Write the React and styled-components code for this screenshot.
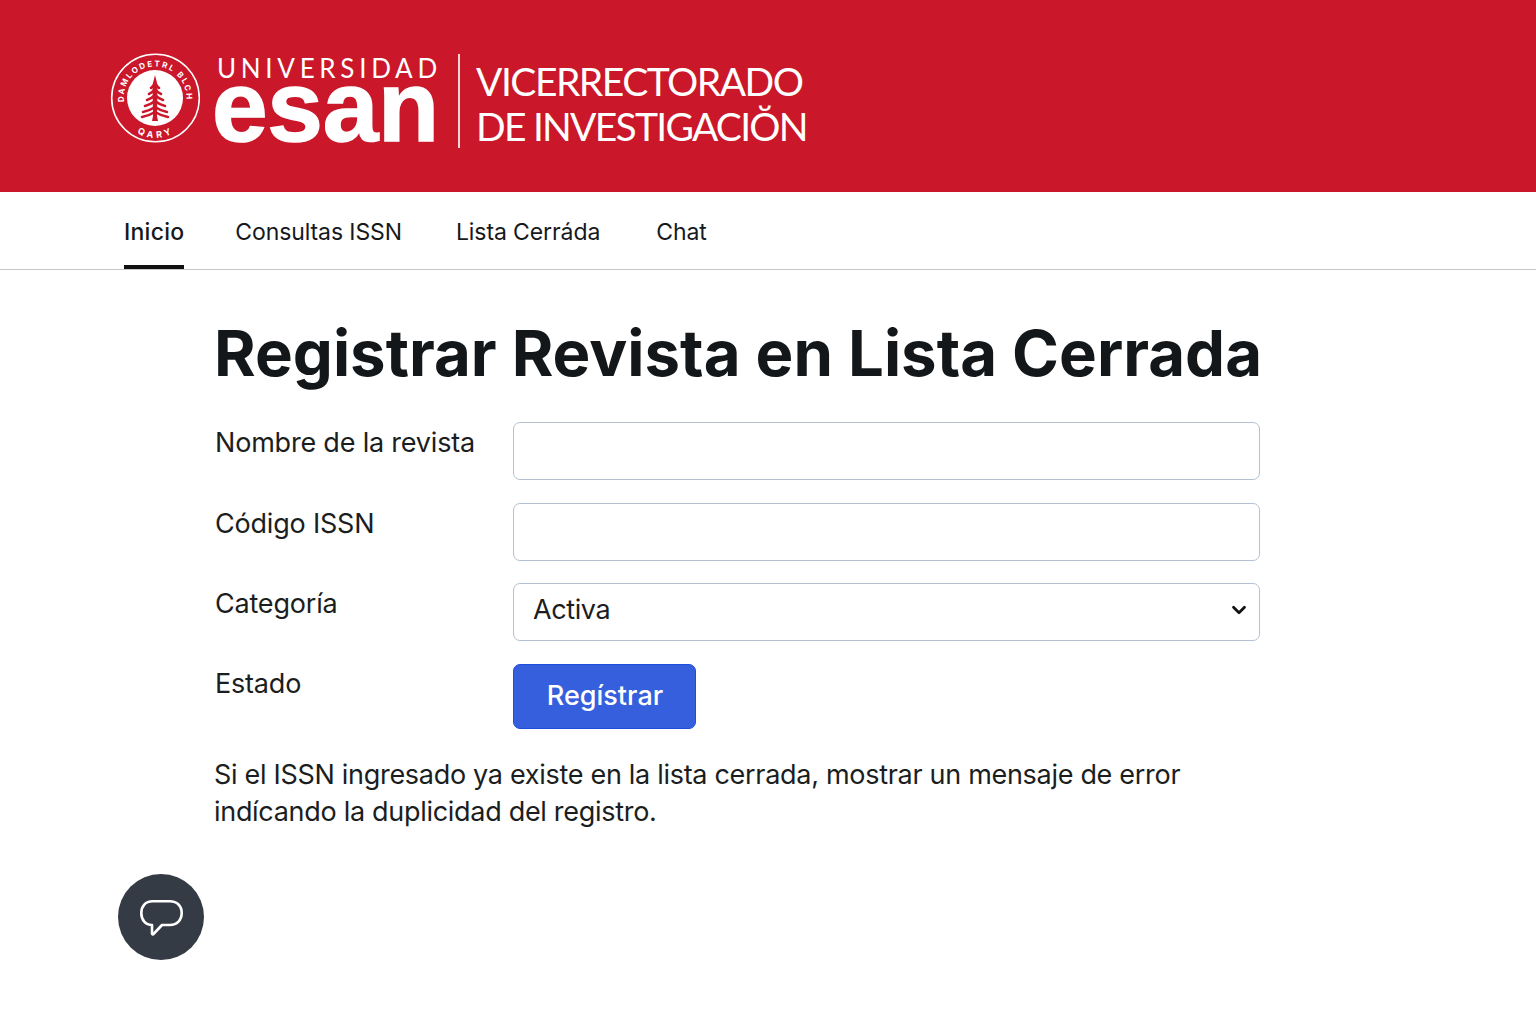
import React from "react";
import styled, { createGlobalStyle } from "styled-components";
import { ChevronDown } from "lucide-react";

const GlobalStyle = createGlobalStyle`
	html, body {
		margin: 0;
		background: #fff;
		font-family: Inter, "Liberation Sans", sans-serif;
		color: #14171a;
	}
	* {
		box-sizing: border-box;
	}
`;

const Page = styled.div`
	position: relative;
	width: 1536px;
	height: 1024px;
	overflow: hidden;
`;

const Header = styled.header`
	height: 192px;
	background: #ca1729;
	display: flex;
	align-items: center;
	padding: 10px 0 0 110px;
	color: #fff;
`;

const Seal = styled.svg`
	width: 90px;
	height: 92px;
	flex: none;
	margin-top: -6px;
`;

const Wordmark = styled.div`
	margin-left: 12px;
	width: 230px;
	height: 96px;
	display: flex;
	flex-direction: column;
`;

const University = styled.span`
	font-family: Lato, sans-serif;
	font-size: 26px;
	line-height: 30px;
	font-weight: 400;
	letter-spacing: 4.7px;
	margin-left: 5px;
	white-space: nowrap;
`;

const Esan = styled.span`
	font-family: "Liberation Sans", Arial, sans-serif;
	font-size: 100px;
	line-height: 46px;
	font-weight: 700;
	letter-spacing: -0.3px;
	-webkit-text-stroke: 1.5px #fff;
	white-space: nowrap;
`;

const Divider = styled.div`
	width: 2px;
	height: 94px;
	margin-left: 16px;
	background: #f4d5d8;
`;

const Unit = styled.div`
	margin-left: 16px;
	margin-top: 5px;
	font-family: Lato, sans-serif;
	font-size: 39px;
	line-height: 45px;
	font-weight: 400;
	white-space: nowrap;
`;

const UnitLine = styled.div`
	letter-spacing: ${(p) => p.$spacing}px;
`;

const Nav = styled.nav`
	height: 78px;
	border-bottom: 1px solid #c4c8cd;
	display: flex;
	padding-left: 124px;
`;

const NavItem = styled.a`
	height: 77px;
	margin-right: ${(p) => p.$gap}px;
	padding-top: 26px;
	font-size: 23px;
	line-height: 29px;
	letter-spacing: ${(p) => (p.$active ? "0.25px" : "-0.1px")};
	color: #16191c;
	font-weight: ${(p) => (p.$active ? 500 : 400)};
	border-bottom: ${(p) => (p.$active ? "4px solid #111" : "none")};
	white-space: nowrap;
`;

const Main = styled.main`
	width: 1046px;
	margin-left: 215px;
	padding-top: 45px;
`;

const Title = styled.h1`
	margin: 0 0 31px -1px;
	font-size: 63.5px;
	line-height: 76px;
	font-weight: 700;
	color: #14171a;
	white-space: nowrap;
`;

const FormGrid = styled.form`
	display: grid;
	grid-template-columns: 298px 747px;
	row-gap: 23px;
`;

const Label = styled.label`
	margin-top: ${(p) => (p.$raised ? "-1px" : "0")};
	font-size: 27px;
	line-height: 41px;
	letter-spacing: -0.2px;
	font-weight: 400;
	color: #1b1e21;
	white-space: nowrap;
`;

const Input = styled.input`
	display: block;
	width: 100%;
	height: 58px;
	border: 1px solid #b4c1d0;
	border-radius: 7px;
	background: #fff;
	outline: none;
`;

const SelectWrap = styled.div`
	position: relative;
	height: 58px;
	margin-top: -1px;
`;

const Select = styled.select`
	display: block;
	width: 100%;
	height: 58px;
	padding: 0 0 5px 19px;
	border: 1px solid #b4c1d0;
	border-radius: 7px;
	background: #fff;
	appearance: none;
	font-family: inherit;
	font-size: 27px;
	letter-spacing: -0.4px;
	color: #1b1e21;
	outline: none;
`;

const SelectChevron = styled(ChevronDown)`
	position: absolute;
	right: 10px;
	top: 16px;
	pointer-events: none;
	color: #111;
`;

const SubmitButton = styled.button`
	display: block;
	width: 183px;
	height: 65px;
	padding: 0 0 2px 1px;
	border: 1px solid #1c4fdc;
	border-radius: 7px;
	background: #355fdc;
	color: #fff;
	font-family: inherit;
	font-size: 27px;
	font-weight: 500;
`;

const Note = styled.p`
	width: 1000px;
	margin: 27px 0 0 -1px;
	font-size: 27px;
	line-height: 37px;
	letter-spacing: -0.3px;
	color: #1b1e21;
`;

const ChatButton = styled.button`
	position: absolute;
	left: 118px;
	top: 874px;
	width: 86px;
	height: 86px;
	border: none;
	border-radius: 50%;
	background: #343b45;
	display: flex;
	align-items: center;
	justify-content: center;
	padding: 0;
`;

const branchRows = [
	[33, 4],
	[39, 6],
	[45, 8],
	[51, 10],
	[57, 12],
	[62, 13],
];

const Logo = () => (
	<Seal viewBox="0 0 90 92">
		<defs>
			<path id="sealTop" d="M14 50 A31.3 31.3 0 1 1 76 50" />
			<path id="sealBottom" d="M27 81 A36 36 0 0 0 63 81" />
		</defs>
		<circle cx="45.500" cy="46" r="43.800" fill="none" stroke="#fff" strokeWidth="1.6" />
		<circle cx="45" cy="46" r="28" fill="#fff" />
		<text fill="#fff" fontFamily="Inter, sans-serif" fontSize="8" fontWeight="700">
			<textPath href="#sealTop" textLength="104">DAMLODETRL BLCH</textPath>
		</text>
		<text fill="#fff" fontFamily="Inter, sans-serif" fontSize="9" fontWeight="700">
			<textPath href="#sealBottom" textLength="36">QARY</textPath>
		</text>
		<path fill="#ca1729" d="M45 23 L47.500 33 L47 64 L48 69 L42 69 L43 64 L42.500 33 Z" />
		<g fill="none" stroke="#ca1729" strokeWidth="2.6" strokeLinecap="round" strokeLinejoin="round">
			{branchRows.map(([y, w]) => (
				<path key={y} d={`M${45 - w} ${y + 3} Q${45 - w / 2} ${y + 2} 45 ${y - 2} Q${45 + w / 2} ${y + 2} ${45 + w} ${y + 3}`} />
			))}
		</g>
	</Seal>
);

const ChatIcon = () => (
	<svg width="46" height="40" viewBox="0 0 46 40" fill="none">
		<path
			d="M14.500 4.300 H32 C39 4.300 43.700 9 43.700 16 C43.700 23 39 28 32 28 H24 L15.500 37 C14.800 37.700 14 37.300 14 36.400 V28 C7.500 28 3.300 23 3.300 16 C3.300 9 7.500 4.300 14.500 4.300 Z"
			stroke="#fff"
			strokeWidth="2.6"
			strokeLinejoin="round"
		/>
	</svg>
);

const navItems = [
	{ label: "Inicio", gap: 51, active: true },
	{ label: "Consultas ISSN", gap: 54 },
	{ label: "Lista Cerráda", gap: 56 },
	{ label: "Chat", gap: 0 },
];

export default function App() {
	return (
		<Page>
			<GlobalStyle />
			<Header>
				<Logo />
				<Wordmark>
					<University>UNIVERSIDAD</University>
					<Esan>esan</Esan>
				</Wordmark>
				<Divider />
				<Unit>
					<UnitLine $spacing={-1.5}>VICERRECTORADO</UnitLine>
					<UnitLine $spacing={-1.75}>DE INVESTIGACIŎN</UnitLine>
				</Unit>
			</Header>
			<Nav>
				{navItems.map((item) => (
					<NavItem key={item.label} $gap={item.gap} $active={item.active}>
						{item.label}
					</NavItem>
				))}
			</Nav>
			<Main>
				<Title>Registrar Revista en Lista Cerrada</Title>
				<FormGrid onSubmit={(e) => e.preventDefault()}>
					<Label>Nombre de la revista</Label>
					<Input type="text" />
					<Label>Código ISSN</Label>
					<Input type="text" />
					<Label $raised>Categoría</Label>
					<SelectWrap>
						<Select defaultValue="Activa">
							<option>Activa</option>
						</Select>
						<SelectChevron size={22} strokeWidth={3} />
					</SelectWrap>
					<Label $raised>Estado</Label>
					<div>
						<SubmitButton type="submit">Regístrar</SubmitButton>
					</div>
				</FormGrid>
				<Note>
					Si el ISSN ingresado ya existe en la lista cerrada, mostrar un mensaje de error
					indícando la duplicidad del registro.
				</Note>
			</Main>
			<ChatButton aria-label="Chat">
				<ChatIcon />
			</ChatButton>
		</Page>
	);
}
